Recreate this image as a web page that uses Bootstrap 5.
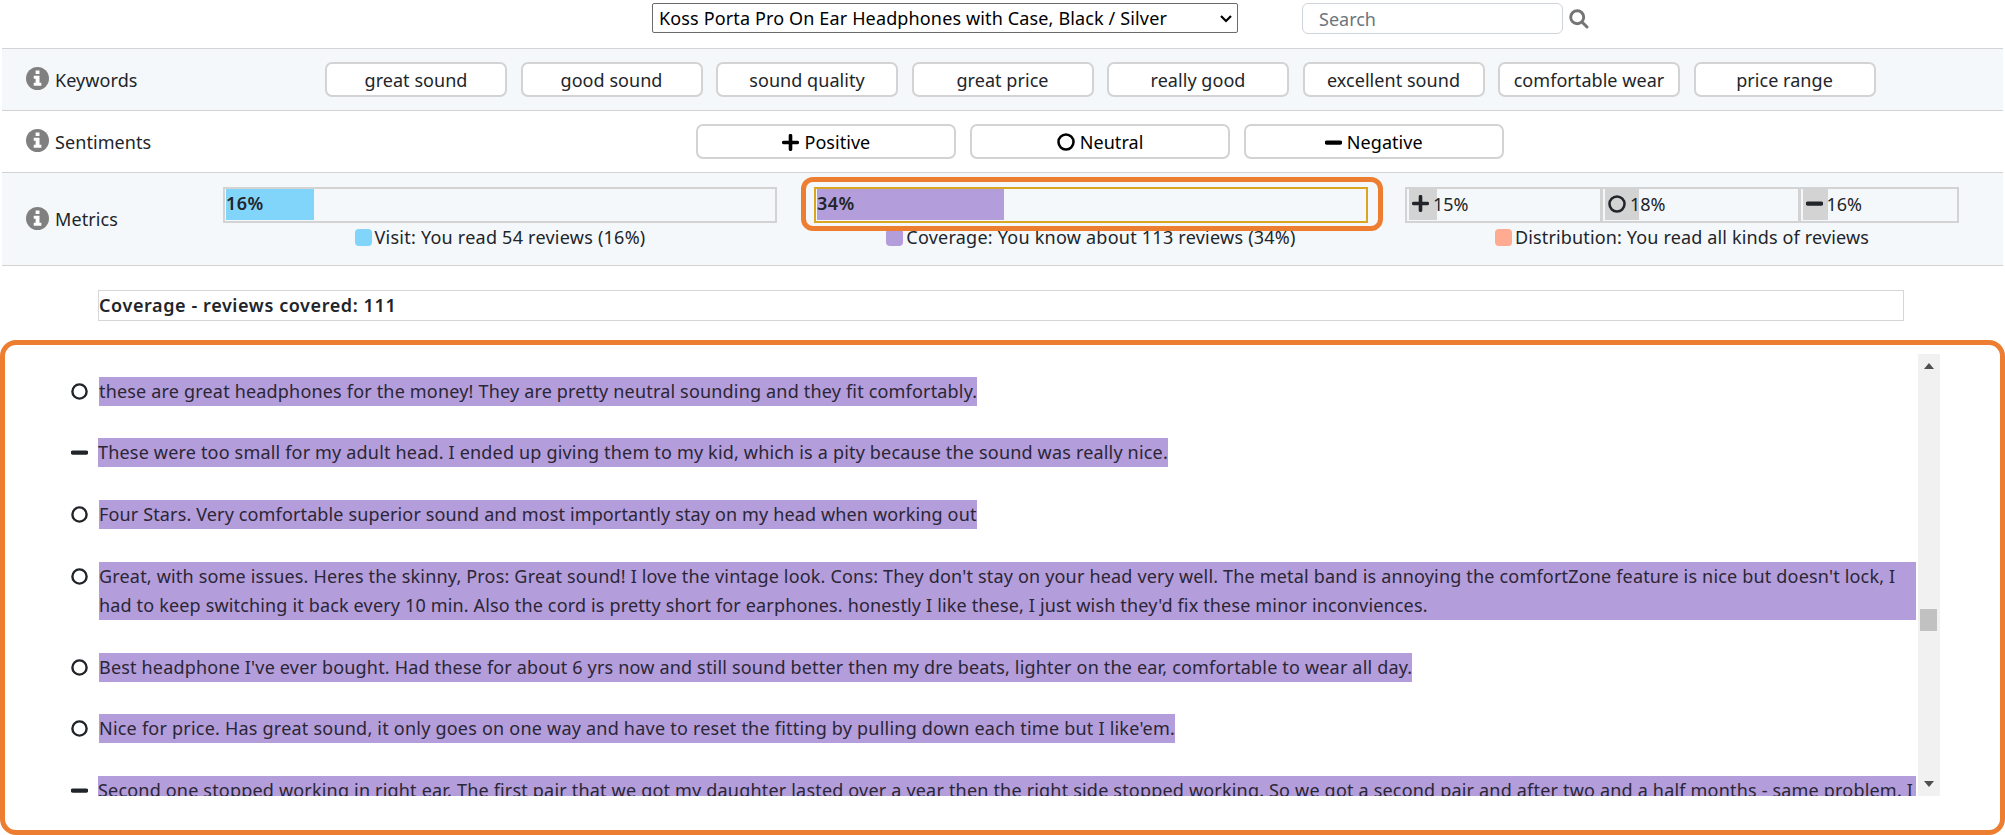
<!DOCTYPE html>
<html lang="en">
<head>
<meta charset="utf-8">
<meta name="viewport" content="width=device-width, initial-scale=1">
<title>Review explorer</title>
<link href="https://cdn.jsdelivr.net/npm/bootstrap@5.3.0/dist/css/bootstrap.min.css" rel="stylesheet">
<style>
  body { font-family: "Noto Sans", "Open Sans", sans-serif; font-size: 18px; line-height: 29px; letter-spacing: .18px; color: #212529; background: #fff; height: 835px; overflow: hidden; }
  svg { display: block; flex: none; }
  .top-tools { height: 48px; padding: 3px 0 0 652px; }
  .product-select { width: 586px; height: 30px; border: 1px solid #6b6b6b; border-radius: 2px; color: #000; padding: 1px 11px 0 6px; letter-spacing: .14px; }
  .search-field { width: 261px; height: 31px; margin-left: 64px; margin-right: 6px; border: 1px solid #ced4da; border-radius: 6px; padding: 0 16px; font-size: 18px; letter-spacing: 0; }
  .search-field::placeholder { color: #6c757d; }
  .panel-row { margin: 0 2px; border-top: 1px solid #d3d3d3; height: 62px; padding-left: 24px; }
  .panel-row.tinted { background: #f4f8fb; }
  .metrics-row { height: 94px; border-bottom: 1px solid #d3d3d3; }
  .row-label { gap: 6px; letter-spacing: .08px; padding-top: 1px; }
  .row-label svg { margin-bottom: 3px; }
  .key-label { width: 299px; }
  .choice { border: 2px solid #d3d3d3; border-radius: 7px; background: #fff; height: 34.5px; line-height: 29px; padding: 1px 0 0; font-size: 18px; letter-spacing: .05px; color: #212529; }
  .key { width: 182px; }
  .mood { width: 260px; color: #000; gap: 5px; }
  .meter { width: 554px; height: 36px; border: 2px solid #d3d3d3; margin-top: 14px; }
  .meter.picked { border-color: #daa520; }
  .meter-fill { height: 31px; margin-left: 1px; padding-left: 0; font-weight: 600; line-height: 29px; font-size: 18px; letter-spacing: .4px; }
  .sky { background: #81d4fa; }
  .violet { background: #b39ddb; }
  .coral { background: #ffab91; }
  .legend-line { gap: 3px; height: 29px; letter-spacing: .24px; }
  .swatch { width: 17px; height: 17px; border-radius: 4px; }
  .share { height: 32px; border-right: 3px solid #d3d3d3; padding: 0 0 0 2px; }
  .share:last-child { border-right: 0; }
  .share-fill { height: 31px; background: #d3d3d3; white-space: nowrap; padding-left: 3px; line-height: 31px; letter-spacing: 0; }
  .share-fill svg { margin-bottom: 2px; }
  .callout { border: 5px solid #ed7d31; border-radius: 12px; top: 4px; left: -13px; width: 582px; height: 54px; pointer-events: none; }
  .summary { margin: 24px 101px 0 98px; height: 31px; border: 1px solid #d6d6d6; font-weight: 600; letter-spacing: .6px; line-height: 29px; }
  .review-frame { margin-top: 19px; height: 495px; border: 5px solid #ed7d31; border-radius: 16px; padding: 9px 60px 0 65px; }
  .review-pane { height: 442px; overflow: hidden; }
  .review-list { padding-top: 22.5px; width: 1845.5px; }
  .review { margin-bottom: 32.5px; }
  .review svg { width: 17px; height: 17px; margin: 6px 11px 0 1px; }
  .review.minus svg { margin-right: 10px; }
  .review p { background: #b39ddb; margin: 0; white-space: nowrap; color: #2b2635; height: 29px; }
  .review p.wrapped { flex: 1; height: 58.2px; }
  .bar-track { width: 22px; background: #f1f1f1; height: 442px; padding: 9px 0 9px; margin-left: 2px; }
  .bar-thumb { width: 17px; height: 22px; background: #c1c1c1; margin-top: 240px; }
</style>
</head>
<body>
<svg width="0" height="0" class="position-absolute">
  <defs>
    <symbol id="info" viewBox="0 0 22 22"><circle cx="11" cy="11" r="11" fill="#808080"/><path fill="#fff" d="M9.2 3.4h3.7v3.3H9.2zM7.4 8.3h5.5v6.7h1.8v2.9H7.4V15h1.8v-3.8H7.4z"/></symbol>
    <symbol id="plus" viewBox="0 0 16 16"><path d="M8 1.6v12.8M1.6 8h12.8" fill="none" stroke="currentColor" stroke-width="3.4" stroke-linecap="round"/></symbol>
    <symbol id="minus" viewBox="0 0 16 16"><path d="M1.8 8h12.4" fill="none" stroke="currentColor" stroke-width="4" stroke-linecap="round"/></symbol>
    <symbol id="ring" viewBox="0 0 17 17"><circle cx="8.5" cy="8.5" r="7.1" fill="none" stroke="currentColor" stroke-width="2.4"/></symbol>
  </defs>
</svg>

<header class="top-tools d-flex">
  <div class="product-select d-flex align-items-center justify-content-between">
    <span>Koss Porta Pro On Ear Headphones with Case, Black / Silver</span>
    <svg width="12" height="8" viewBox="0 0 12 8" style="margin-right:-6px"><path d="M1 1l5 5 5-5" fill="none" stroke="#000" stroke-width="2.2"/></svg>
  </div>
  <input class="search-field" type="text" placeholder="Search">
  <svg width="20" height="20" viewBox="0 0 20 20" style="margin-top:6px"><circle cx="8.2" cy="8.2" r="6.5" fill="none" stroke="#757575" stroke-width="2.9"/><path d="M13 13l5 5" stroke="#757575" stroke-width="3" stroke-linecap="round"/></svg>
</header>

<section class="panel-row tinted d-flex align-items-center">
  <div class="row-label key-label d-flex align-items-center"><svg width="23" height="23"><use href="#info"/></svg><span>Keywords</span></div>
  <div class="d-flex" style="gap:13.5px">
    <button class="choice key">great sound</button>
    <button class="choice key">good sound</button>
    <button class="choice key">sound quality</button>
    <button class="choice key">great price</button>
    <button class="choice key">really good</button>
    <button class="choice key">excellent sound</button>
    <button class="choice key">comfortable wear</button>
    <button class="choice key">price range</button>
  </div>
</section>

<section class="panel-row d-flex align-items-center">
  <div class="row-label d-flex align-items-center" style="width:670.4px"><svg width="23" height="23"><use href="#info"/></svg><span>Sentiments</span></div>
  <div class="d-flex" style="gap:13.7px">
    <button class="choice mood d-flex align-items-center justify-content-center"><svg width="17" height="17"><use href="#plus"/></svg>Positive</button>
    <button class="choice mood d-flex align-items-center justify-content-center"><svg width="18" height="18"><use href="#ring"/></svg>Neutral</button>
    <button class="choice mood d-flex align-items-center justify-content-center"><svg width="17" height="17"><use href="#minus"/></svg>Negative</button>
  </div>
</section>

<section class="panel-row tinted metrics-row d-flex">
  <div class="row-label d-flex align-items-center" style="width:197px"><svg width="23" height="23"><use href="#info"/></svg><span>Metrics</span></div>
  <div class="d-flex" style="gap:37px">
    <div>
      <div class="meter"><div class="meter-fill sky" style="width:16%">16%</div></div>
      <div class="legend-line d-flex align-items-center justify-content-center"><span class="swatch sky"></span>Visit: You read 54 reviews (16%)</div>
    </div>
    <div class="position-relative">
      <div class="meter picked"><div class="meter-fill violet" style="width:34%">34%</div></div>
      <div class="legend-line d-flex align-items-center justify-content-center"><span class="swatch violet"></span>Coverage: You know about 113 reviews (34%)</div>
      <div class="callout position-absolute"></div>
    </div>
    <div>
      <div class="meter d-flex">
        <div class="share" style="width:196px"><div class="share-fill d-flex align-items-center" style="width:28px"><svg width="17" height="17" class="me-1"><use href="#plus"/></svg>15%</div></div>
        <div class="share" style="width:197.5px"><div class="share-fill d-flex align-items-center" style="width:34px"><svg width="18" height="18" class="me-1"><use href="#ring"/></svg>18%</div></div>
        <div class="share flex-fill"><div class="share-fill d-flex align-items-center" style="width:25px"><svg width="17" height="17" class="me-1"><use href="#minus"/></svg>16%</div></div>
      </div>
      <div class="legend-line d-flex align-items-center justify-content-center" style="letter-spacing:.15px"><span class="swatch coral"></span>Distribution: You read all kinds of reviews</div>
    </div>
  </div>
</section>

<div class="summary">Coverage - reviews covered: 111</div>

<main class="review-frame">
  <div class="review-pane d-flex">
    <div class="review-list">
      <div class="review d-flex"><svg><use href="#ring"/></svg><p>these are great headphones for the money! They are pretty neutral sounding and they fit comfortably.</p></div>
      <div class="review minus d-flex"><svg><use href="#minus"/></svg><p>These were too small for my adult head. I ended up giving them to my kid, which is a pity because the sound was really nice.</p></div>
      <div class="review d-flex"><svg><use href="#ring"/></svg><p style="letter-spacing:.14px">Four Stars. Very comfortable superior sound and most importantly stay on my head when working out</p></div>
      <div class="review d-flex pt-1" style="margin-top:-3px"><svg><use href="#ring"/></svg><p class="wrapped">Great, with some issues. Heres the skinny, Pros: Great sound! I love the vintage look. Cons: They don't stay on your head very well. The metal band is annoying the comfortZone feature is nice but doesn't lock, I<br><span style="letter-spacing:.16px">had to keep switching it back every 10 min. Also the cord is pretty short for earphones. honestly I like these, I just wish they'd fix these minor inconviences.</span></p></div>
      <div class="review d-flex"><svg><use href="#ring"/></svg><p>Best headphone I've ever bought. Had these for about 6 yrs now and still sound better then my dre beats, lighter on the ear, comfortable to wear all day.</p></div>
      <div class="review d-flex"><svg><use href="#ring"/></svg><p style="letter-spacing:.22px">Nice for price. Has great sound, it only goes on one way and have to reset the fitting by pulling down each time but I like'em.</p></div>
      <div class="review minus d-flex"><svg><use href="#minus"/></svg><p class="wrapped" style="letter-spacing:.19px">Second one stopped working in right ear. The first pair that we got my daughter lasted over a year then the right side stopped working. So we got a second pair and after two and a half months - same problem. I</p></div>
    </div>
    <div class="bar-track d-flex flex-column align-items-center">
      <svg width="10" height="6" viewBox="0 0 10 6"><path d="M0 6L5 0l5 6z" fill="#505050"/></svg>
      <div class="bar-thumb"></div>
      <svg width="10" height="6" viewBox="0 0 10 6" class="mt-auto"><path d="M0 0h10L5 6z" fill="#505050"/></svg>
    </div>
  </div>
</main>
<script src="https://cdn.jsdelivr.net/npm/bootstrap@5.3.0/dist/js/bootstrap.bundle.min.js"></script>
</body>
</html>
